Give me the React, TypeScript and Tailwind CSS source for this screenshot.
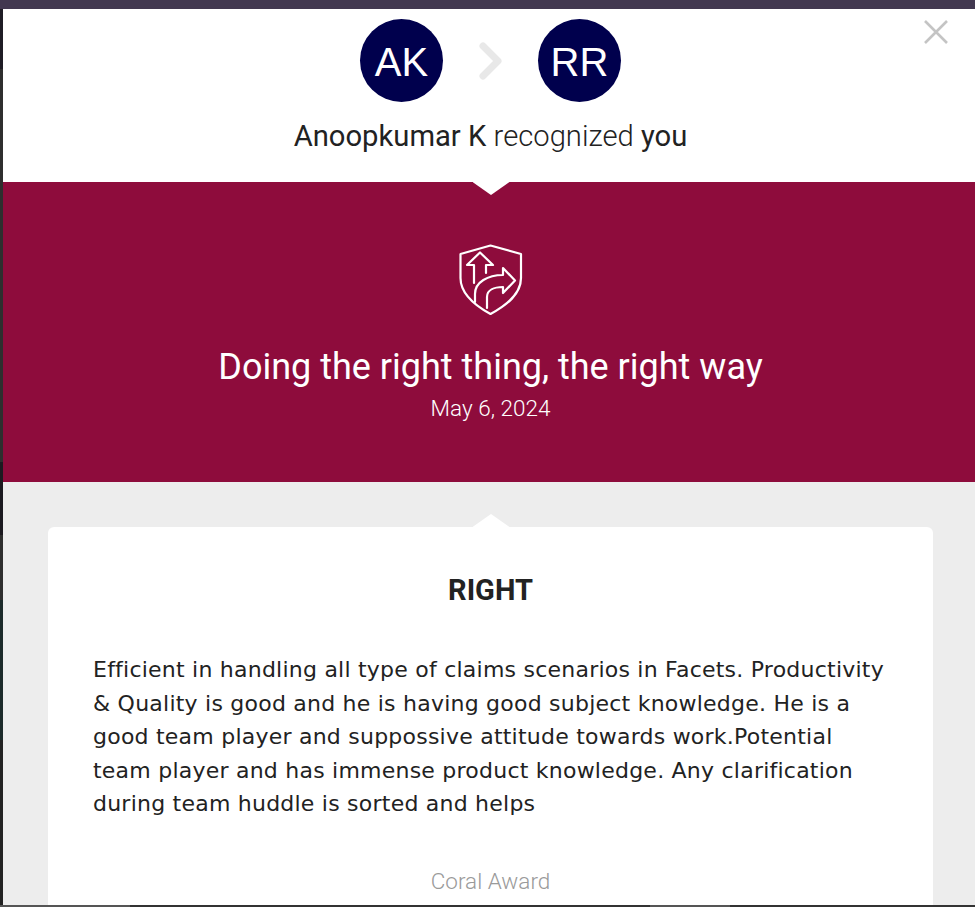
function ShieldIcon() {
  return (
    <svg viewBox="0 0 64 72" width="64" height="72" fill="none" stroke="white" strokeWidth="2.2" strokeLinejoin="round" strokeLinecap="round">
      {/* shield */}
      <path d="M31.5 1.5 62 10 V34 C62 50 48 61 31.5 70 C15 61 1.5 50 1.5 34 V10 Z" />
      {/* up arrow */}
      <path d="M15 39 V21 H8 L21 8.5 L34 21 H27 V29" />
      {/* right arrow, outer and inner curve */}
      <path d="M16 58 V50 C16 38 29 31 44 31 V24 L56 36.5 L44 49 V43 C35 43 28 46 28 53 V64" />
    </svg>
  );
}

function Avatar({ initials }: { initials: string }) {
  return (
    <div className="flex h-[83px] w-[83px] items-center justify-center rounded-full bg-[#00004d] pt-[3px] font-['Liberation_Sans',sans-serif] text-[40px] text-white">
      {initials}
    </div>
  );
}

export default function App() {
  return (
    <div className="flex h-[907px] w-[975px] flex-col overflow-hidden bg-[#2e2e2e] font-['Roboto',sans-serif]">
      <div className="h-[9px] shrink-0 bg-[#423850]" />

      <div className="flex min-h-0 flex-1">
        {/* sliver of the page behind the modal */}
        <div className="flex w-[3px] shrink-0 flex-col">
          <div className="h-[60px] bg-[#1f1c25]" />
          <div className="h-[393px] bg-[#2e2e2e]" />
          <div className="h-[73px] bg-[#1c1a20]" />
          <div className="h-[65px] bg-[#2e2e2e]" />
          <div className="h-[140px] bg-[#1c2a2a]" />
          <div className="flex-1 bg-[#222222]" />
        </div>

        <div className="relative flex w-[975px] shrink-0 flex-col overflow-hidden bg-white">
          <button className="absolute top-[11px] right-[30px] text-[#c4c4c4]">
            <svg viewBox="0 0 24 24" width="24" height="24" fill="none" stroke="currentColor" strokeWidth="2.6">
              <path d="M1 1 23 23 M23 1 1 23" />
            </svg>
          </button>

          <header className="flex h-[173px] shrink-0 flex-col items-center pt-[10px]">
            <div className="flex items-center gap-[36px]">
              <Avatar initials="AK" />
              <svg viewBox="0 0 23 38" width="23" height="38" fill="none" stroke="#e8e8e8" strokeWidth="7" strokeLinecap="round" strokeLinejoin="round">
                <path d="M4 4 19 19 4 34" />
              </svg>
              <Avatar initials="RR" />
            </div>
            <p className="mt-[14px] text-[29.2px] leading-[40px] text-[#222222]">
              Anoopkumar K <span className="font-light">recognized</span> you
            </p>
          </header>

          <section className="relative flex h-[300px] shrink-0 flex-col items-center bg-[#8e0c3c] pt-[62px] text-white">
            <div className="absolute top-0 left-1/2 h-[13px] w-[37px] -translate-x-[18px] bg-white [clip-path:polygon(0_0,100%_0,50%_100%)]" />
            <ShieldIcon />
            <h1 className="mt-[29px] text-[36px] leading-[44px] font-normal">
              Doing the right thing, the right way
            </h1>
            <p className="mt-[7px] text-[22.5px] leading-[24px] font-light">May 6, 2024</p>
          </section>

          <section className="flex-1 bg-[#ededed] px-[45px] pt-[45px]">
            <div className="relative h-[500px] rounded-[6px] bg-white px-[45px] pt-[43px]">
              <div className="absolute -top-[13px] left-1/2 h-[13px] w-[37px] -translate-x-[18px] bg-white [clip-path:polygon(50%_0,100%_100%,0_100%)]" />
              <h2 className="text-center text-[29px] leading-[40px] font-bold text-[#222222]">RIGHT</h2>
              <p className="mt-[43px] font-['DejaVu_Sans',sans-serif] text-[22px] leading-[33.5px] tracking-[0.23px] text-[#222222]">
                Efficient in handling all type of claims scenarios in Facets. Productivity &amp; Quality is good and he is having good subject knowledge. He is a good team player and suppossive attitude towards work.Potential team player and has immense product knowledge. Any clarification during team huddle is sorted and helps
              </p>
              <p className="mt-[46px] text-center text-[22.5px] leading-[28px] font-light text-[#9a9a9a]">Coral Award</p>
            </div>
          </section>
        </div>
      </div>

      <div className="flex h-[2px] shrink-0">
        <div className="w-[130px] bg-[#555555]" />
        <div className="w-[520px] bg-[#333333]" />
        <div className="w-[80px] bg-[#555555]" />
        <div className="flex-1 bg-[#333333]" />
      </div>
    </div>
  );
}
